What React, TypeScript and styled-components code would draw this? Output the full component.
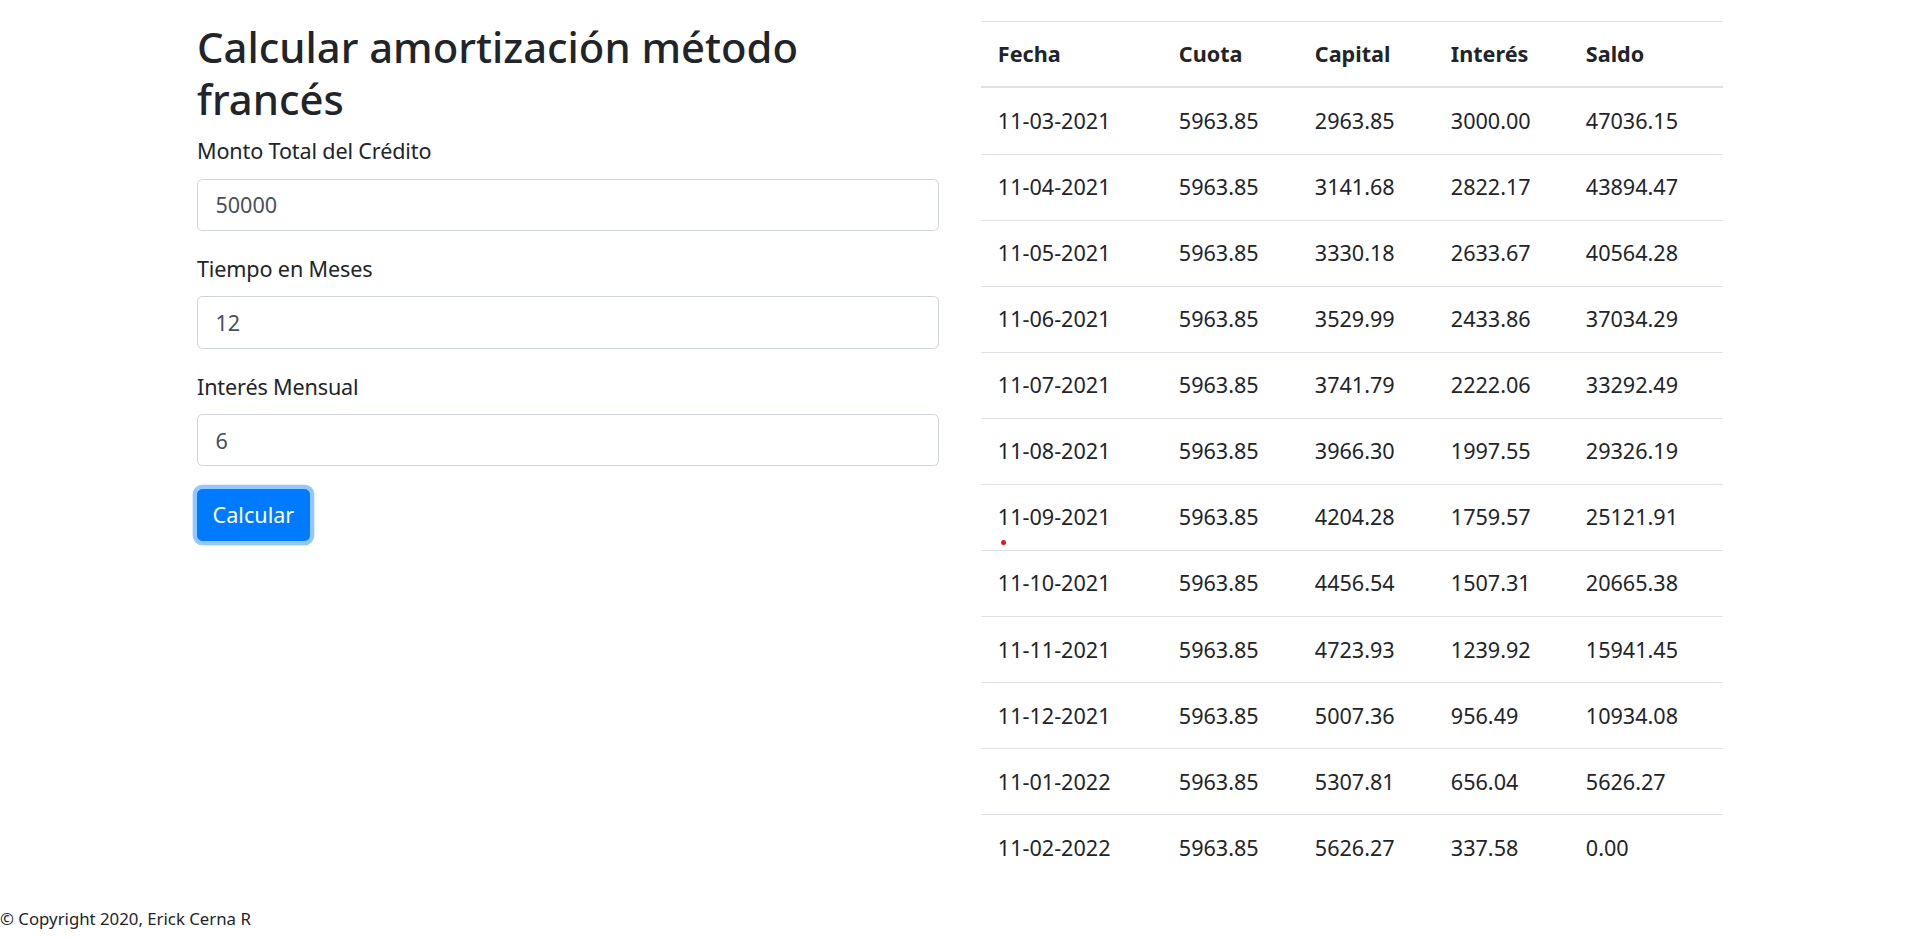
import React from "react";
import styled, { createGlobalStyle } from "styled-components";

const GlobalStyle = createGlobalStyle`
  *, *::before, *::after { box-sizing: border-box; }
  body {
    margin: 0;
    background: #fff;
    color: #212529;
    font-family: "Noto Sans", "Open Sans", sans-serif;
    font-size: 21.6px;
    line-height: 1.5;
  }
`;

const Page = styled.div`
  min-height: 938px;
  display: flex;
  flex-direction: column;
`;

const Main = styled.main`
  display: grid;
  grid-template-columns: 742px 742px;
  column-gap: 42px;
  justify-content: center;
  align-items: start;
  padding-top: 21px;
`;

const FormColumn = styled.section`
  display: flex;
  flex-direction: column;
`;

const Title = styled.h2`
  margin: 0 0 10.8px;
  font-size: 41.8px;
  font-weight: 500;
  line-height: 51.8px;
`;

const FormGroup = styled.div`
  display: flex;
  flex-direction: column;
  margin-bottom: 22.4px;
`;

const Label = styled.label`
  display: block;
  margin-bottom: 10.8px;
  font-size: 21.6px;
  line-height: 32.4px;
  letter-spacing: -0.15px;
`;

const Input = styled.input`
  display: block;
  width: 100%;
  height: 52.2px;
  padding: 9px 17.4px;
  font-family: inherit;
  font-size: 21.6px;
  line-height: 32.4px;
  color: #495057;
  background: #fff;
  border: 1px solid #ced4da;
  border-radius: 5.4px;
  outline: none;
`;

const Button = styled.button`
  align-self: flex-start;
  height: 52px;
  padding: 0 14.6px;
  font-family: inherit;
  font-size: 21.6px;
  line-height: 32.4px;
  color: #fff;
  background: #007bff;
  border: 1px solid #007bff;
  border-radius: 5.4px;
  box-shadow: 0 0 0 4.3px rgba(38, 143, 255, 0.5);
  cursor: pointer;
`;

const TableWrap = styled.div`
  position: relative;
`;

const Table = styled.table`
  width: 100%;
  border-collapse: collapse;
  color: #212529;
`;

const Th = styled.th<{ $w?: number }>`
  width: ${(p) => (p.$w ? `${p.$w}px` : "auto")};
  padding: 16px 16.8px;
  text-align: left;
  font-weight: 700;
  line-height: 32.4px;
  vertical-align: bottom;
  border-top: 1px solid #dee2e6;
  border-bottom: 2px solid #dee2e6;
`;

const Td = styled.td`
  padding: 16.35px 16.8px;
  line-height: 32.4px;
  vertical-align: top;
  border-top: 1px solid #dee2e6;
`;

const Row = styled.tr`
  &:first-child td { border-top: none; }
`;

const Dot = styled.span`
  position: absolute;
  left: 19.5px;
  top: 518.5px;
  width: 5px;
  height: 5px;
  border-radius: 50%;
  background: #e4161b;
`;

const Footer = styled.footer`
  margin-top: 26px;
  font-size: 16.8px;
  line-height: 24px;
  color: #212529;
`;

const rows: [string, string, string, string, string][] = [
  ["11-03-2021", "5963.85", "2963.85", "3000.00", "47036.15"],
  ["11-04-2021", "5963.85", "3141.68", "2822.17", "43894.47"],
  ["11-05-2021", "5963.85", "3330.18", "2633.67", "40564.28"],
  ["11-06-2021", "5963.85", "3529.99", "2433.86", "37034.29"],
  ["11-07-2021", "5963.85", "3741.79", "2222.06", "33292.49"],
  ["11-08-2021", "5963.85", "3966.30", "1997.55", "29326.19"],
  ["11-09-2021", "5963.85", "4204.28", "1759.57", "25121.91"],
  ["11-10-2021", "5963.85", "4456.54", "1507.31", "20665.38"],
  ["11-11-2021", "5963.85", "4723.93", "1239.92", "15941.45"],
  ["11-12-2021", "5963.85", "5007.36", "956.49", "10934.08"],
  ["11-01-2022", "5963.85", "5307.81", "656.04", "5626.27"],
  ["11-02-2022", "5963.85", "5626.27", "337.58", "0.00"],
];

export default function App() {
  return (
    <Page>
      <GlobalStyle />
      <Main>
        <FormColumn>
          <Title>Calcular amortización método francés</Title>
          <FormGroup>
            <Label htmlFor="monto">Monto Total del Crédito</Label>
            <Input id="monto" type="text" defaultValue="50000" />
          </FormGroup>
          <FormGroup>
            <Label htmlFor="tiempo">Tiempo en Meses</Label>
            <Input id="tiempo" type="text" defaultValue="12" />
          </FormGroup>
          <FormGroup>
            <Label htmlFor="interes">Interés Mensual</Label>
            <Input id="interes" type="text" defaultValue="6" />
          </FormGroup>
          <Button type="button">Calcular</Button>
        </FormColumn>
        <TableWrap>
          <Table>
            <thead>
              <tr>
                <Th $w={181}>Fecha</Th>
                <Th $w={136}>Cuota</Th>
                <Th $w={136}>Capital</Th>
                <Th $w={135}>Interés</Th>
                <Th>Saldo</Th>
              </tr>
            </thead>
            <tbody>
              {rows.map((r) => (
                <Row key={r[0]}>
                  {r.map((c, i) => (
                    <Td key={i}>{c}</Td>
                  ))}
                </Row>
              ))}
            </tbody>
          </Table>
          <Dot />
        </TableWrap>
      </Main>
      <Footer>© Copyright 2020, Erick Cerna R</Footer>
    </Page>
  );
}
